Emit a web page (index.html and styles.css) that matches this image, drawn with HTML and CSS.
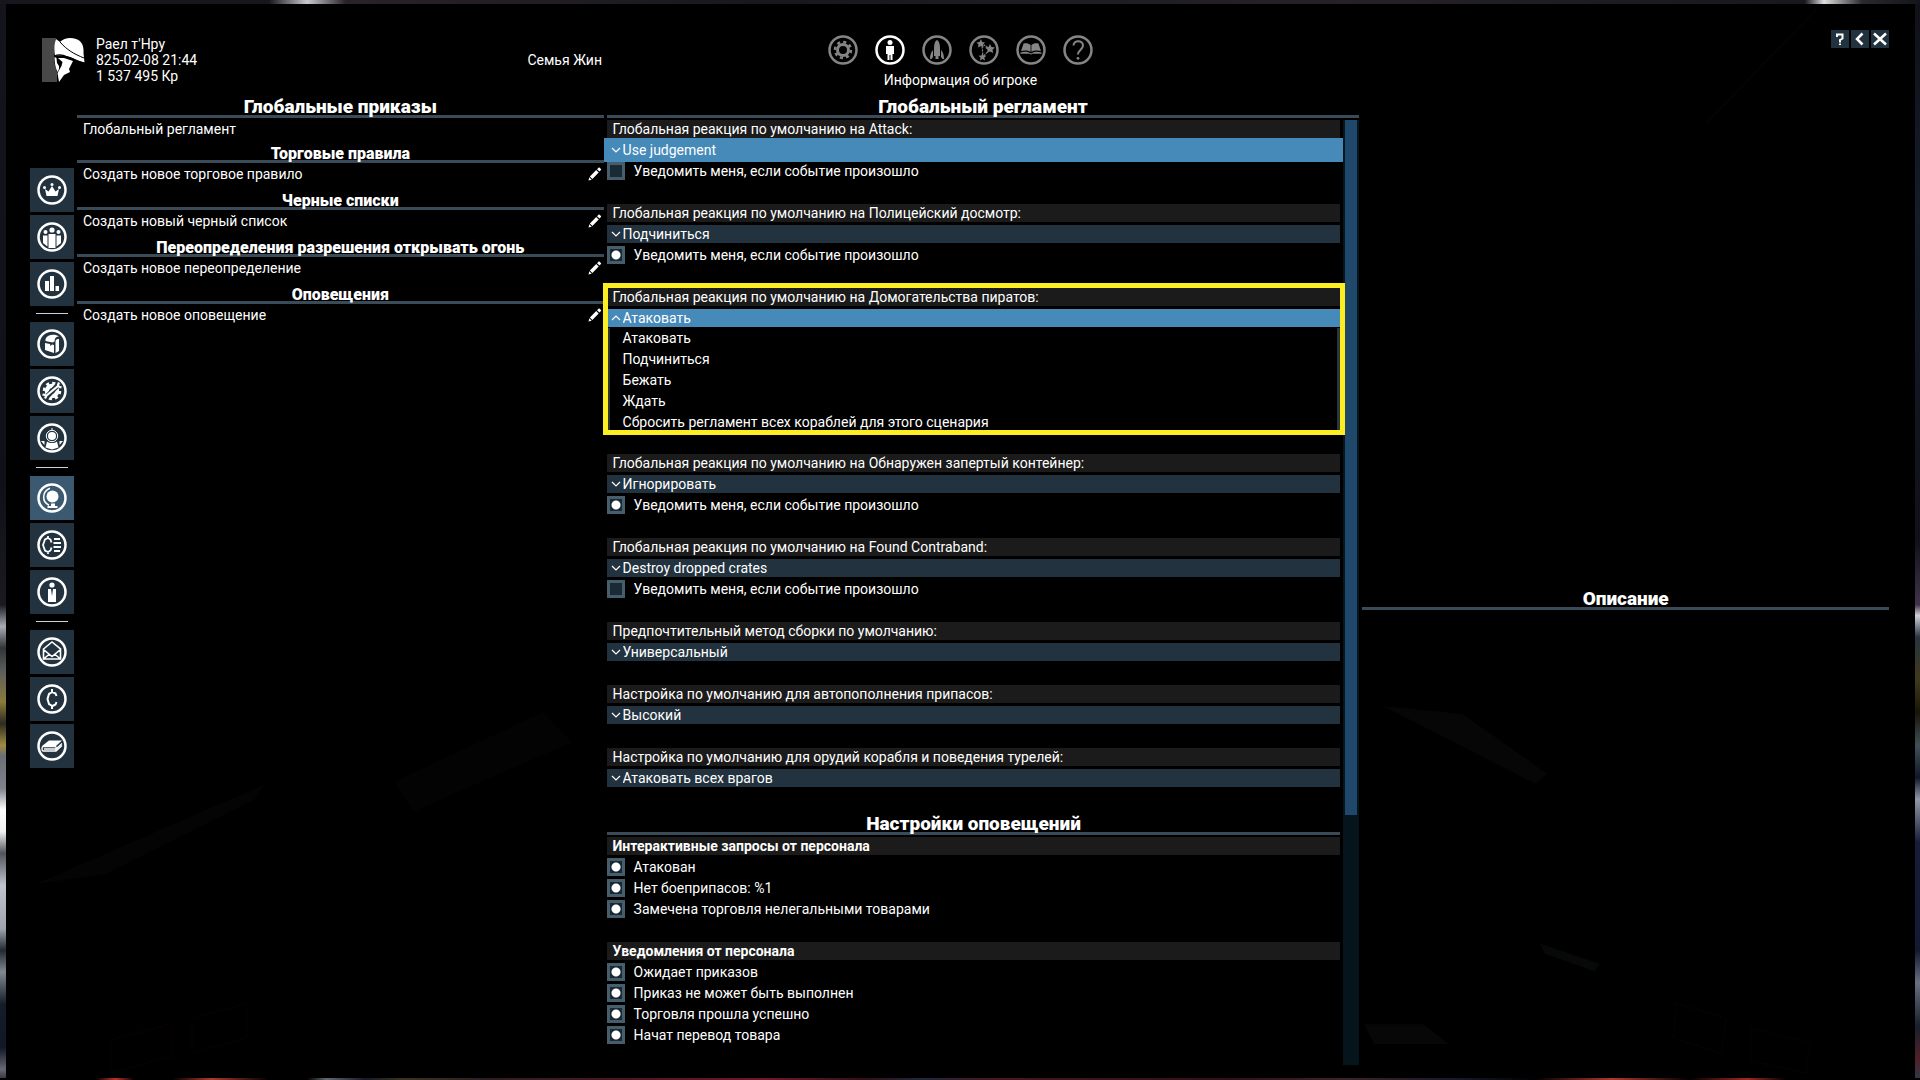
FILE: index.html
```html
<!DOCTYPE html>
<html lang="ru">
<head>
<meta charset="utf-8">
<meta name="viewport" content="width=device-width, initial-scale=1">
<title>Информация об игроке</title>
<link rel="stylesheet" href="styles.css">
</head>
<body>
<svg width="0" height="0" class="defs" aria-hidden="true">
  <symbol id="pencil" viewBox="0 0 14 14"><path d="M0.5 13.500l0.800-3.200 2.400 2.400z M1.900 9.500l6.300-6.500 2.500 2.500-6.300 6.500z M9 2.200l1.500-1.500c.4-.4.8-.3 1.200 0l1.200 1.200c.4.4.4.8 0 1.200l-1.400 1.500z" fill="#fff"/></symbol>
  <symbol id="down" viewBox="0 0 10 10"><path d="M1 3l4 4 4-4" fill="none" stroke="#fff" stroke-width="1.200"/></symbol>
  <symbol id="up" viewBox="0 0 10 10"><path d="M1 7l4-4 4 4" fill="none" stroke="#fff" stroke-width="1.200"/></symbol>
</svg>
<div class="screen">
<div class="panel">
  <svg class="backdrop" viewBox="0 0 1920 1080" preserveAspectRatio="none" aria-hidden="true">
    <path d="M1385 706l80 8 85 60-12 10z" fill="#060606"/>
    <path d="M540 712l30 30-160 70-20-30z" fill="#030303"/>
    <path d="M260 785L30 885l70-10 150-75z" fill="#040404"/>
    <path d="M1543 945l60 20-5 8-50-18z" fill="#070909"/>
    <path d="M1366 1026h60l25 20h-75z" fill="#070707"/>
    <path d="M1822 4L1710 120" stroke="#080808" fill="none"/>
    <path d="M1680 1005l50 15-5 35-48-15zM1755 1030l60 15-5 30-55-12zM187 1020l55-15v35l-55 15zM105 1042l62-17v33l-62 17z" stroke="#0a0302" fill="none"/>
  </svg>
  <header class="top">
    <div class="player">
      <svg class="portrait" viewBox="0 0 43 44" aria-hidden="true">
        <path d="M0 0h14l-2 12v12l3 10v10H0z" fill="#484848"/>
        <path d="M14 1l4 3c4-4 10-5 16-3 6 2 8 7 7.500 14l1 9.500C36 24 31 19 24 18c-4-1-8-1-11 0-1-6-1-11 1-17z" fill="#fff"/>
        <path d="M18 4c7 8 14 12 24 16" fill="none" stroke="#000"/>
        <path d="M12.500 18c4-2 9-1 13 1 4 1 8 4 17 6" fill="none" stroke="#000" stroke-width="1.200"/>
        <path d="M12.500 19l2 1 .5 5 2 3v3l-1.500 3c-2-4-3-9-3-15z" fill="#fff"/>
        <path d="M16 20h6l9 3-2 4-2 4 1 3-6 3-5 7-1.500-9 4-7 1-4z" fill="#fff"/>
      </svg>
      <div class="who"><div>Раел т'Нру</div><div>825-02-08 21:44</div><div>1 537 495 Кр</div></div>
      <div class="family">Семья Жин</div>
    </div>
    <nav class="tabs" aria-label="Меню">
      <div class="tab-row">
        <button class="tab" aria-label="Настройки"><svg viewBox="0 0 30 30"><circle cx="15" cy="15" r="13.500"/><circle cx="15" cy="15" r="5.500" stroke-width="3"/><circle cx="15" cy="15" r="8" stroke-width="2.500" stroke-dasharray="3.140 3.140"/></svg></button>
        <button class="tab active" aria-label="Игрок"><svg viewBox="0 0 30 30"><circle cx="15" cy="15" r="13.500"/><g class="f"><circle cx="15" cy="7.500" r="2.500"/><path d="M11 11h8v8h-1.500v6h-2v-5h-1v5h-2v-6H11z"/></g></svg></button>
        <button class="tab" aria-label="Корабль"><svg viewBox="0 0 30 30"><circle cx="15" cy="15" r="13.500"/><path class="f" d="M15 5c2 1 3 4 3 8v8h-1.500v3h-3v-3H12v-8c0-4 1-7 3-8z M11 15v7l-1.500 2H8c0-4 1-7 3-9z M19 15v7l1.500 2H22c0-4-1-7-3-9z"/></svg></button>
        <button class="tab" aria-label="Карта"><svg viewBox="0 0 30 30"><circle cx="15" cy="15" r="13.500"/><path stroke-width="1.200" stroke-dasharray="2 1" d="M12 8l9 6-7 8-1-12"/><path class="f" d="M12 4l1 3 3 .5-2 2 .5 3L12 11l-3 1.500.5-3-2-2 3-.5z M21 9l1.500 3 3.500.5-2.500 2.300.6 3.200-3.100-1.500-3 1.500.6-3.200L16 12.500l3.500-.5z M13.500 18l1 2.500 3 .3-2.200 1.800.7 2.900-2.500-1.500-2.600 1.500.7-2.900-2.200-1.800 3-.3z"/></svg></button>
        <button class="tab" aria-label="Энциклопедия"><svg viewBox="0 0 30 30"><circle cx="15" cy="15" r="13.500"/><path class="f" d="M14.600 10c-2-1.500-4-2-7-1.500L5 16c3-.8 7-.8 9.600.8z M15.400 10c2-1.500 4-2 7-1.500L25 16c-3-.8-7-.8-9.600.8z M4.500 17.500c3-1 7-1 9.500.5.700.6 1.300.6 2 0 2.500-1.500 6.500-1.500 9.500-.5v1.300h-9c-1 1-2 1-3 0h-9z"/></svg></button>
        <button class="tab" aria-label="Помощь"><svg viewBox="0 0 30 30"><circle cx="15" cy="15" r="13.500"/><path stroke-width="2" d="M10.500 10.500C10.500 4.500 20 5 20 10.500c0 4-5 4.500-5 9"/><circle class="f" cx="15" cy="23.300" r="1.400"/></svg></button>
      </div>
      <div class="tab-label">Информация об игроке</div>
    </nav>
    <div class="window-buttons">
      <button aria-label="Справка"><svg viewBox="0 0 18 18"><path d="M6 7V4.500h5.500v4L9 10v2.500" fill="none" stroke="#fff" stroke-width="2"/><path d="M8 13.500h2v1.500H8z" fill="#fff"/></svg></button>
      <button aria-label="Назад"><svg viewBox="0 0 18 18"><path d="M11.500 3.500L6 9l5.500 5.500" fill="none" stroke="#fff" stroke-width="2.500"/></svg></button>
      <button aria-label="Закрыть"><svg viewBox="0 0 18 18"><path d="M3 3.500l12 11M15 3.500l-12 11" fill="none" stroke="#fff" stroke-width="2.500"/></svg></button>
    </div>
  </header>

  <div class="body">
    <nav class="side" aria-label="Разделы">
      <div class="side-group">
        <button aria-label="Империя"><svg viewBox="0 0 30 30"><circle cx="15" cy="15" r="13.500"/><path class="f" d="M8 14l3.500 2.500L15 11l3.500 5.500L22 14l-1.500 7h-11z"/><g class="f"><circle cx="7.500" cy="12.500" r="1.500"/><circle cx="15" cy="9.500" r="1.500"/><circle cx="22.500" cy="12.500" r="1.500"/></g></svg></button>
        <button aria-label="Фракции"><svg viewBox="0 0 30 30"><circle cx="15" cy="15" r="13.500"/><g class="f"><circle cx="15" cy="8" r="2.600"/><circle cx="8.500" cy="10" r="2"/><circle cx="21.500" cy="10" r="2"/><path d="M11.500 12h7v14h-7z M6 13.500h4.500v11L6 21z M19.500 13.500H24V21l-4.500 3.500z"/></g></svg></button>
        <button aria-label="Статистика"><svg viewBox="0 0 30 30"><circle cx="15" cy="15" r="13.500"/><path class="f" d="M8 12h4v10H8z M13 7h4v15h-4z M18.500 17H22v5h-3.500z"/></svg></button>
      </div>
      <div class="side-group">
        <button aria-label="Инвентарь"><svg viewBox="0 0 30 30"><circle cx="15" cy="15" r="13.500"/><path class="f" d="M8.500 10c2-5 10-5 13.500-2.500-3 0-4.500 1.500-4.500 5l-2 1-7-1.500z M8 14l5 1 .5 2 1.500-1.500 2 .5v8L8 21z M18.500 13c0-3 2-3 3.500-3v12l-3.500 2z"/></svg></button>
        <button aria-label="Изготовление"><svg viewBox="0 0 30 30"><circle cx="15" cy="15" r="13.500"/><circle cx="15" cy="15" r="5" stroke-width="4.500"/><circle cx="15" cy="15" r="8" stroke-width="2.500" stroke-dasharray="3.140 3.140"/><path d="M6 21.500l4-1L20 10l4-1" stroke="#22333f" stroke-width="5"/><path d="M5.500 18.500l2.500.5 1 1.500-1 2M9 20L21 10M24.500 11.500l-3-1-.5-1.500 1-2.500" stroke-width="2.200"/></svg></button>
        <button aria-label="Персонал"><svg viewBox="0 0 30 30"><circle cx="15" cy="15" r="13.500"/><circle class="f" cx="15" cy="13" r="4"/><circle cx="15" cy="13" r="5.700" stroke-width="1"/><path class="f" d="M14.500 5h1v2h-1z M10 18.500c3 2 7 2 10 0l1.500 6-6.500 2-6.500-2z M4 18h3.500v4z M22.500 18H26l-3.500 4z"/></svg></button>
      </div>
      <div class="side-group">
        <button class="active" aria-label="Глобальные приказы"><svg viewBox="0 0 30 30"><circle cx="15" cy="15" r="13.500"/><circle class="f" cx="15.500" cy="13.500" r="6"/><path stroke-width="1.500" d="M13 5.200C5 8 4.500 19 12 22.200"/><path class="f" d="M14 20.500h4v2.500h2.500v2h-10v-2H14z"/></svg></button>
        <button aria-label="Финансы"><svg viewBox="0 0 30 30"><circle cx="15" cy="15" r="13.500"/><path stroke-width="1.800" d="M14.500 12.500l-1-3-2.500-1.500-3 1.500-2 5.500 2 5.500 3 1.500 2.500-1.500 1-3M11 6v2.500M11 21v3"/><path stroke-width="2" d="M17 9h6M16.500 13h7.500M16.500 17h7.500M17 21h6"/></svg></button>
        <button aria-label="Личная информация"><svg viewBox="0 0 30 30"><circle cx="15" cy="15" r="13.500"/><circle class="f" cx="15" cy="8" r="2.600"/><path class="f" d="M11 12h3l1 7 1-7h3v13h-8z"/></svg></button>
      </div>
      <div class="side-group">
        <button aria-label="Сообщения"><svg viewBox="0 0 30 30"><circle cx="15" cy="15" r="13.500"/><path stroke-width="1.600" d="M6.500 12L15 5l8.500 7v10h-17z M6.500 12.500l8.500 7 8.500-7M6.500 22l6-5M23.500 22l-6-5"/></svg></button>
        <button aria-label="Транзакции"><svg viewBox="0 0 30 30"><circle cx="15" cy="15" r="13.500"/><path stroke-width="2" d="M19.500 12l-1-2.500L15.500 8 12 10l-1.500 5 1.500 5 3.500 2 3-1.500 1-2.500M15 5v3M15 22v3"/></svg></button>
        <button aria-label="Журнал"><svg viewBox="0 0 30 30"><circle cx="15" cy="15" r="13.500"/><path class="f" d="M5 15l7-5.500h13L19 15z"/><path stroke-width="1.300" d="M19 15.500H6.500c-2 0-2 4.500 0 4.500H19l6-5.500M7 18h12l6-5.500M19 15.500v4"/></svg></button>
      </div>
    </nav>

    <section class="col orders">
      <h2>Глобальные приказы</h2>
      <a class="order" href="#reglament">Глобальный регламент</a>
      <h3>Торговые правила</h3>
      <a class="order" href="#trade">Создать новое торговое правило<svg><use href="#pencil"/></svg></a>
      <h3>Черные списки</h3>
      <a class="order" href="#black">Создать новый черный список<svg><use href="#pencil"/></svg></a>
      <h3>Переопределения разрешения открывать огонь</h3>
      <a class="order" href="#fire">Создать новое переопределение<svg><use href="#pencil"/></svg></a>
      <h3>Оповещения</h3>
      <a class="order" href="#alerts">Создать новое оповещение<svg><use href="#pencil"/></svg></a>
    </section>

    <section class="col settings" id="reglament">
      <h2>Глобальный регламент</h2>
      <div class="scroller">
        <div class="list">
          <div class="group">
            <label class="bar" for="s1">Глобальная реакция по умолчанию на Attack:</label>
            <div class="drop hover"><svg><use href="#down"/></svg><select id="s1"><option>Use judgement</option></select></div>
            <label class="check"><input type="checkbox">Уведомить меня, если событие произошло</label>
          </div>
          <div class="group">
            <label class="bar" for="s2">Глобальная реакция по умолчанию на Полицейский досмотр:</label>
            <div class="drop"><svg><use href="#down"/></svg><select id="s2"><option>Подчиниться</option></select></div>
            <label class="check"><input type="checkbox" checked>Уведомить меня, если событие произошло</label>
          </div>
          <div class="group framed">
            <label class="bar" for="s3">Глобальная реакция по умолчанию на Домогательства пиратов:</label>
            <div class="drop open"><svg><use href="#up"/></svg><select id="s3"><option>Атаковать</option></select></div>
            <ul class="options" role="listbox">
              <li role="option">Атаковать</li>
              <li role="option">Подчиниться</li>
              <li role="option">Бежать</li>
              <li role="option">Ждать</li>
              <li role="option">Сбросить регламент всех кораблей для этого сценария</li>
            </ul>
          </div>
          <div class="group">
            <label class="bar" for="s4">Глобальная реакция по умолчанию на Обнаружен запертый контейнер:</label>
            <div class="drop"><svg><use href="#down"/></svg><select id="s4"><option>Игнорировать</option></select></div>
            <label class="check"><input type="checkbox" checked>Уведомить меня, если событие произошло</label>
          </div>
          <div class="group">
            <label class="bar" for="s5">Глобальная реакция по умолчанию на Found Contraband:</label>
            <div class="drop"><svg><use href="#down"/></svg><select id="s5"><option>Destroy dropped crates</option></select></div>
            <label class="check"><input type="checkbox">Уведомить меня, если событие произошло</label>
          </div>
          <div class="group">
            <label class="bar" for="s6">Предпочтительный метод сборки по умолчанию:</label>
            <div class="drop"><svg><use href="#down"/></svg><select id="s6"><option>Универсальный</option></select></div>
          </div>
          <div class="group">
            <label class="bar" for="s7">Настройка по умолчанию для автопополнения припасов:</label>
            <div class="drop"><svg><use href="#down"/></svg><select id="s7"><option>Высокий</option></select></div>
          </div>
          <div class="group last">
            <label class="bar" for="s8">Настройка по умолчанию для орудий корабля и поведения турелей:</label>
            <div class="drop"><svg><use href="#down"/></svg><select id="s8"><option>Атаковать всех врагов</option></select></div>
          </div>
          <h2>Настройки оповещений</h2>
          <div class="group">
            <div class="bar strong">Интерактивные запросы от персонала</div>
            <label class="check"><input type="checkbox" checked>Атакован</label>
            <label class="check"><input type="checkbox" checked>Нет боеприпасов: %1</label>
            <label class="check"><input type="checkbox" checked>Замечена торговля нелегальными товарами</label>
          </div>
          <div class="group end">
            <div class="bar strong">Уведомления от персонала</div>
            <label class="check"><input type="checkbox" checked>Ожидает приказов</label>
            <label class="check"><input type="checkbox" checked>Приказ не может быть выполнен</label>
            <label class="check"><input type="checkbox" checked>Торговля прошла успешно</label>
            <label class="check"><input type="checkbox" checked>Начат перевод товара</label>
          </div>
        </div>
        <div class="track"><div class="thumb"></div></div>
      </div>
    </section>

    <aside class="col details">
      <div class="preview"></div>
      <section><h2>Описание</h2></section>
    </aside>
  </div>
</div>
</div>
</body>
</html>
```
FILE: styles.css
```css
* { box-sizing: border-box; }

body {
  margin: 0;
  background: #14161c;
  color: #fff;
  font: 14px/18px Roboto, sans-serif;
}

.defs { position: absolute; }

button {
  padding: 0;
  border: 0;
  color: inherit;
  font: inherit;
  cursor: pointer;
}

button svg { display: block; }

/* the cockpit view shows through along the edges of the menu */
.screen {
  display: flex;
  min-height: 100vh;
  padding: 4px 5px 2px 6px;
  background:
    linear-gradient(90deg, #000 0 5%, #c03028 6%, #000 7% 9%, #b03828 11%, #000 14% 16%, #606870 17%, #181828 19%, #3a3420 21%, #2b2024 25%, #4a1520 32%, #701828 40%, #301018 45%, #202838 48%, #4a1520 52%, #301018 64%, #3a2428 70%, #181828 76%, #000 80%, #b03828 84%, #000 88%, #a02820 91%, #000 93%) bottom / 100% 2px no-repeat,
    linear-gradient(90deg, #16161c 0 14%, #c8c8d0 16%, #2a2228 18%, #18181e 40%, #26202a 70%, #18181e 94%, #e0dce0 95%, #2a2a2e 97%, #14141c) top / 100% 4px no-repeat,
    linear-gradient(#14141c 0, #101018 45%, #1a1a20 56%, #a8acb4 58%, #303438 60%, #5a5c5c 62%, #8a7c3c 65%, #2c2a20 67%, #a08c40 69%, #6c6e78 70%, #80828c 73%, #fff 75%, #f0f0f0 77%, #50545c 79%, #c0c4cc 82%, #a0a4ac 86%, #202830 88%, #808890 90%, #141c28 93%, #101828 97%, #686870 99%, #303038) left / 6px 100% no-repeat,
    linear-gradient(#101018 0, #141c28 20%, #101018 50%, #40344c 56%, #d0d0d8 57%, #283440 59%, #40381c 63%, #181408 66%, #405058 69%, #101828 72%, #9098a8 74%, #181c38 78%, #141830 88%, #687080 91%, #18202c 95%, #502028 98%, #303848) right / 5px 100% no-repeat;
}

.panel {
  position: relative;
  display: flex;
  flex: 1;
  flex-direction: column;
  padding: 26px 26px 13px 24px;
  background: #000;
}

.backdrop {
  position: absolute;
  inset: 0;
  width: 100%;
  height: 100%;
}

/* header */
.top {
  position: relative;
  display: grid;
  grid-template-columns: 1fr 265px 1fr;
  padding: 0 0 10px 2px;
}

.player {
  display: flex;
  gap: 11px;
  padding: 8px 226px 0 10px;
  line-height: 16px;
}

.portrait { width: 43px; height: 44px; }
.who { margin-top: -2px; }
.family { margin: 14px 0 0 auto; }

.tabs { padding-top: 5px; text-align: center; white-space: nowrap; }
.tab-row { display: flex; justify-content: space-between; }
.tab { background: none; color: #858585; }
.tab.active { color: #fff; }
.tab svg, .side svg { width: 30px; height: 30px; fill: none; stroke: currentColor; stroke-width: 2.5; }
.tab .f, .side .f { fill: currentColor; stroke: none; }
.tab-label { margin-top: 6px; }

.window-buttons { display: flex; justify-content: flex-end; gap: 2px; }
.window-buttons button { width: 18px; height: 18px; background: #22333f; }

/* columns */
.body {
  position: relative;
  display: grid;
  flex: 1;
  grid-template-columns: 44px 526fr 752fr 526fr;
  gap: 3px;
}

.col { display: flex; flex-direction: column; min-width: 0; }

h2, h3 {
  margin: 0;
  border-bottom: 3px solid #3a4a57;
  font-weight: 900;
  text-align: center;
}

h2 { font-size: 19px; line-height: 16px; }
h3 { font-size: 16px; line-height: 13px; }

/* section buttons */
.side { padding-top: 69px; }
.side-group { display: flex; flex-direction: column; gap: 3px; }
.side-group + .side-group::before {
  width: 32px;
  height: 1px;
  margin: 7px auto 5px;
  background: #d0d0d0;
  content: "";
}
.side button { display: grid; place-items: center; height: 44px; background: #22333f; }
.side .active { background: #3b5a71; }

/* orders */
.order {
  display: flex;
  align-items: center;
  justify-content: space-between;
  height: 18px;
  margin: 2px 2px 11px 0;
  padding-left: 6px;
  color: inherit;
  text-decoration: none;
}
.order svg { width: 14px; height: 14px; }
.orders h2 + .order { margin-bottom: 9px; }

/* settings */
.scroller { display: flex; flex: 1; gap: 3px; padding-top: 2px; }
.list { flex: 1; }
.group { position: relative; display: flex; flex-direction: column; gap: 3px; margin-bottom: 24px; }
.group.last { margin-bottom: 29px; }
.group.end { margin-bottom: 0; }
.list h2 { margin-bottom: 2px; }

.bar { height: 18px; padding-left: 6px; background: #1b1b1b; }
.strong { font-weight: 700; }

.drop { display: grid; grid-template-columns: 1fr; height: 18px; background: #22333f; }
.drop svg, .drop select { grid-area: 1 / 1; }
.drop svg { align-self: center; width: 10px; height: 10px; margin-left: 4px; pointer-events: none; z-index: 1; }
.drop select {
  appearance: none;
  padding: 0 0 0 16px;
  border: 0;
  background: none;
  color: inherit;
  font: inherit;
}
.hover, .open { background: #468ab9; }
.hover { box-shadow: 0 0 0 3px #468ab9; }

.check { display: flex; align-items: center; gap: 9px; }
.check input {
  appearance: none;
  width: 18px;
  height: 18px;
  margin: 0;
  border: 3px solid #465e6c;
  background: #1a2a35;
}
.check input:checked { background: radial-gradient(circle, #fff 0 3px, #fff 4px, #1a2a35 5px); }

.group.framed { margin-bottom: 21px; }
.framed::after {
  position: absolute;
  inset: -5px -5px -2px -4px;
  border: 5px solid #fcee21;
  content: "";
  pointer-events: none;
}
.options {
  margin: -2px 0 0;
  padding: 0 0 0 13px;
  border: solid #2c3538;
  border-width: 0 3px;
  line-height: 21px;
  list-style: none;
}

.track { width: 16px; padding: 0 2px; background: #06141b; }
.thumb { height: 73.5%; background: #20486a; }

.details { display: grid; grid-template-rows: 493fr 474fr; }
```
